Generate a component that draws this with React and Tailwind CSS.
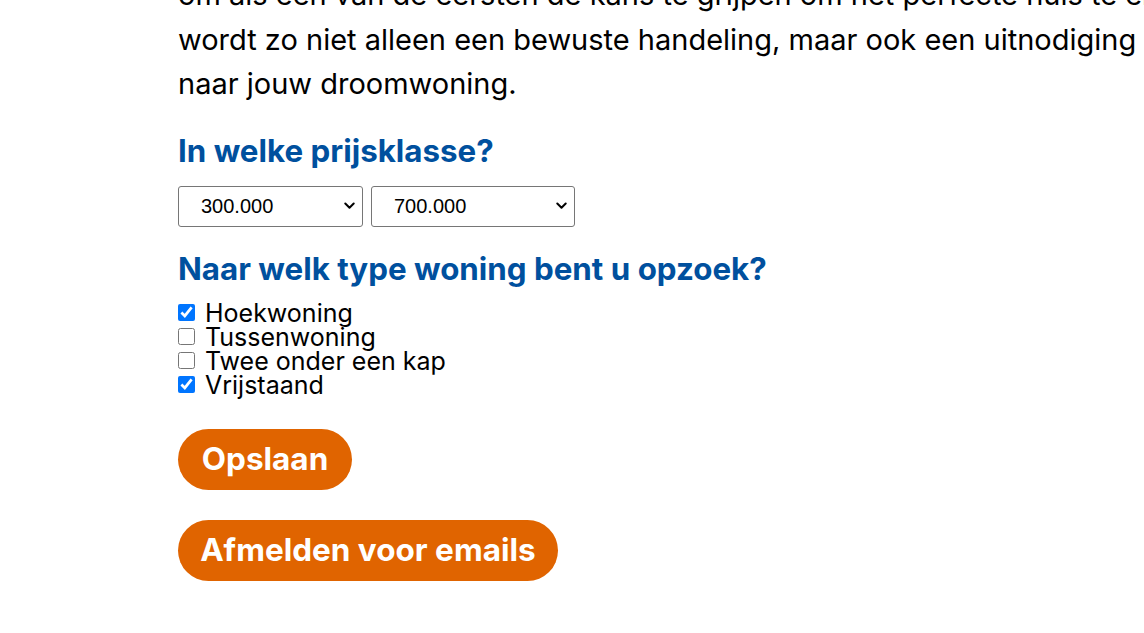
import React, { useState } from 'react';

const types = [
  { id: 'hoek', label: 'Hoekwoning', checked: true },
  { id: 'tussen', label: 'Tussenwoning', checked: false },
  { id: 'twee', label: 'Twee onder een kap', checked: false },
  { id: 'vrij', label: 'Vrijstaand', checked: true },
];

const prices = ['100.000', '200.000', '300.000', '400.000', '500.000', '600.000', '700.000', '800.000'];

const Chevron = () => (
  <svg
    className="pointer-events-none absolute right-[8px] top-[16px]"
    width="11"
    height="8"
    viewBox="0 0 11 8"
    fill="none"
  >
    <path d="M1.3 1.5L5.5 5.7L9.7 1.5" stroke="#000" strokeWidth="2" strokeLinecap="round" strokeLinejoin="round" />
  </svg>
);

const PriceSelect = ({ value, width }) => {
  const [val, setVal] = useState(value);
  return (
    <div className={`relative ${width}`}>
      <select
        value={val}
        onChange={(e) => setVal(e.target.value)}
        className="h-[41px] w-full appearance-none rounded-[3px] border border-[#767676] bg-white pl-[22px] text-[20px] text-black"
        style={{ fontFamily: '"Liberation Sans", Arial, sans-serif' }}
      >
        {prices.map((p) => (
          <option key={p} value={p}>{p}</option>
        ))}
      </select>
      <Chevron />
    </div>
  );
};

const App = () => {
  const [checked, setChecked] = useState(
    Object.fromEntries(types.map((t) => [t.id, t.checked]))
  );

  return (
    <div
      className="h-[633px] w-full overflow-hidden bg-white text-black"
      style={{ fontFamily: 'Inter, "Open Sans", sans-serif' }}
    >
      <div className="-mt-[27px] pl-[178px]">
        <p className="whitespace-nowrap text-[29px] leading-[44.5px]">
          om als een van de eersten de kans te grijpen om het perfecte huis te ervaren. Je inschrijving
          <br />
          wordt zo niet alleen een bewuste handeling, maar ook een uitnodiging voor een spannende reis
          <br />
          naar jouw droomwoning.
        </p>

        <h2 className="mt-[26px] text-[31.3px] font-bold leading-[36px] text-[#00509e]">
          In welke prijsklasse?
        </h2>

        <div className="mt-[17px] flex gap-[8px]">
          <PriceSelect value="300.000" width="w-[185px]" />
          <PriceSelect value="700.000" width="w-[204px]" />
        </div>

        <h2 className="mt-[24px] text-[31.3px] font-bold leading-[36px] text-[#00509e]">
          Naar welk type woning bent u opzoek?
        </h2>

        <div className="mt-[14px] flex flex-col">
          {types.map((t) => (
            <label key={t.id} className="flex h-[24px] items-center">
              <input
                type="checkbox"
                checked={checked[t.id]}
                onChange={() => setChecked({ ...checked, [t.id]: !checked[t.id] })}
                className="m-0 h-[17px] w-[17px] accent-[#0075ff]"
              />
              <span className="ml-[10px] text-[25px] leading-[24px]">{t.label}</span>
            </label>
          ))}
        </div>

        <div className="mt-[32px] flex flex-col items-start gap-[30px]">
          <button className="flex h-[61px] w-[174px] items-center justify-center rounded-full bg-[#e06400] text-[31.5px] font-bold text-white">
            Opslaan
          </button>
          <button className="flex h-[61px] w-[380px] items-center justify-center rounded-full bg-[#e06400] text-[31.5px] font-bold text-white">
            Afmelden voor emails
          </button>
        </div>
      </div>
    </div>
  );
};

export default App;
